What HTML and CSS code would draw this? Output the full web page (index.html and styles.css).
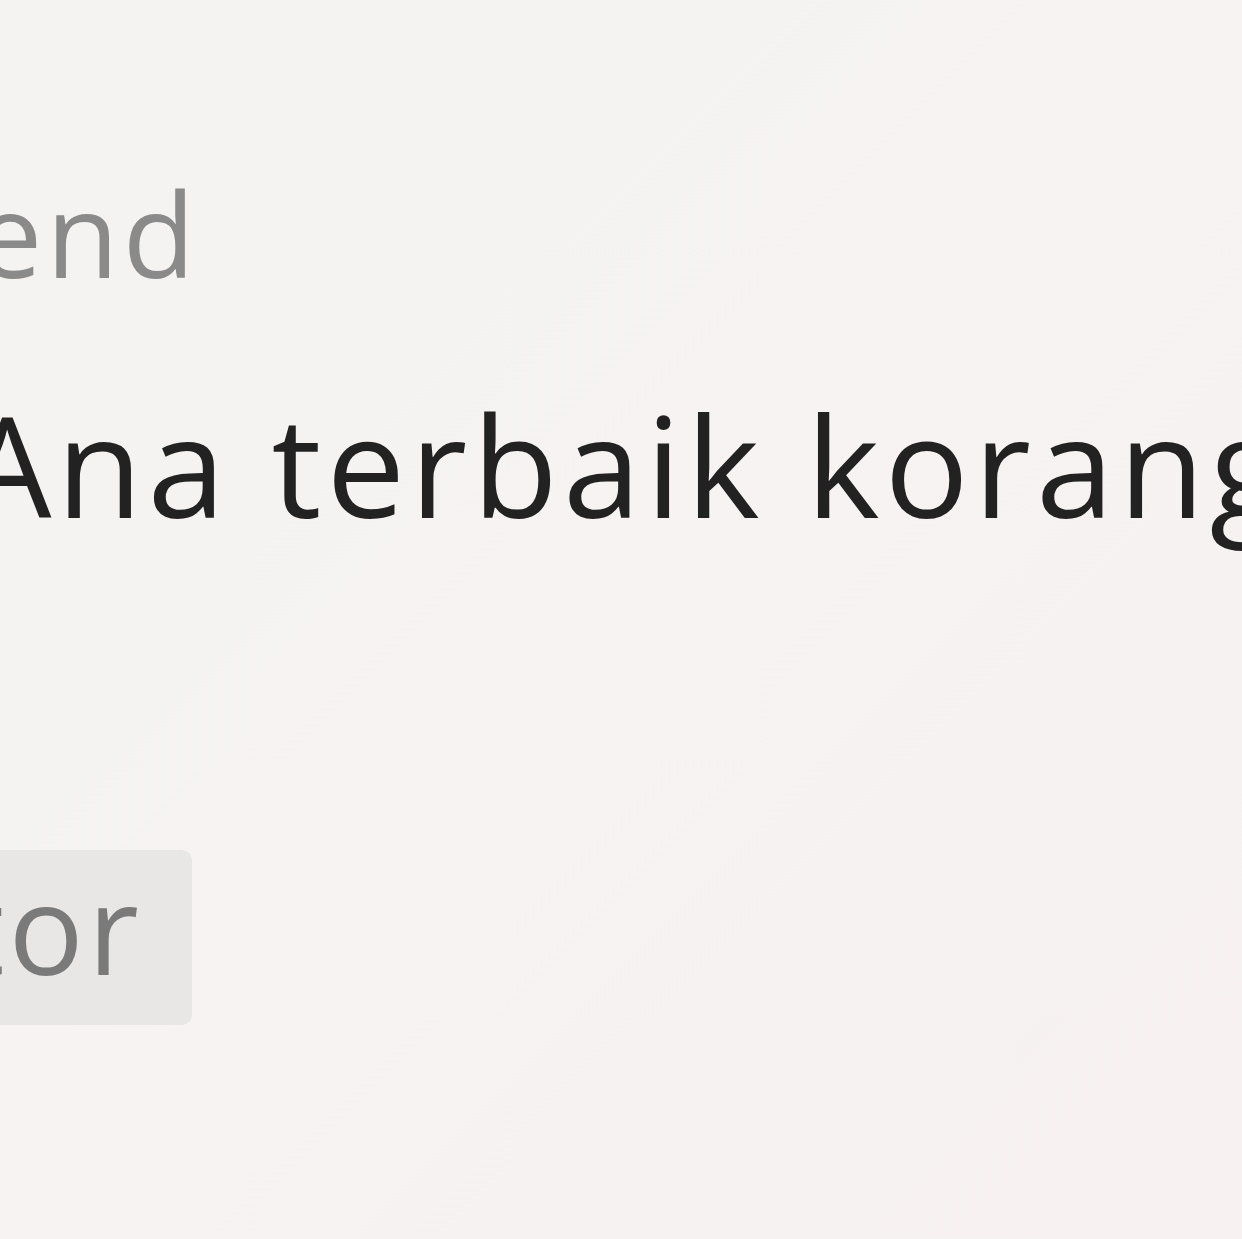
FILE: index.html
```html
<!DOCTYPE html>
<html>
<head>
<meta charset="utf-8">
<link rel="stylesheet" href="styles.css">
</head>
<body>
<div class="card">
  <div class="label">end</div>
  <div class="message">Ana terbaik korang</div>
  <div class="badge">tor</div>
</div>
</body>
</html>
```
FILE: styles.css
```css
html, body {
  margin: 0;
  padding: 0;
  width: 1242px;
  height: 1239px;
  overflow: hidden;
}
body {
  background: linear-gradient(135deg, #f4f3f1 0%, #f6f3f2 50%, #f7f1f1 100%);
  font-family: "Open Sans", "Noto Sans", sans-serif;
}
.card {
  display: flex;
  flex-direction: column;
  align-items: flex-start;
}
.label {
  margin-top: 174px;
  margin-left: -24px;
  font-size: 118px;
  line-height: 1;
  letter-spacing: 4px;
  color: #8a8a8a;
  white-space: nowrap;
}
.message {
  margin-top: 102px;
  margin-left: -37px;
  font-size: 140px;
  line-height: 1;
  letter-spacing: 5px;
  color: #222222;
  white-space: nowrap;
}
.badge {
  margin-top: 316px;
  margin-left: -40px;
  padding: 14px 49px 36px 0;
  font-size: 125px;
  line-height: 1;
  letter-spacing: 4px;
  color: #7a7a7a;
  background: #e9e7e6;
  border-radius: 10px;
  white-space: nowrap;
}
```
